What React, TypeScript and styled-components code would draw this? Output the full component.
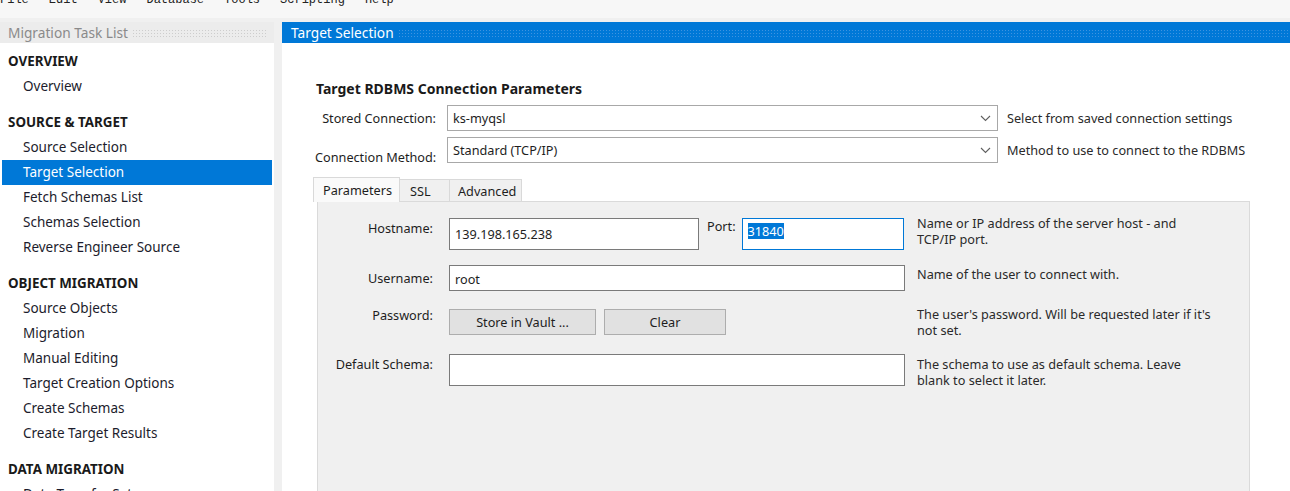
import React from 'react'
import styled, { createGlobalStyle } from 'styled-components'

const GlobalStyle = createGlobalStyle`
  html, body {
    margin: 0;
    padding: 0;
    background: #f0f0f0;
  }
  body {
    font-family: "Noto Sans", "Open Sans", sans-serif;
    color: #1e1e1e;
  }
`

const menuItems = ['File', 'Edit', 'View', 'Database', 'Tools', 'Scripting', 'Help']

type Section = { title: string; items: string[] }

const sections: Section[] = [
  { title: 'OVERVIEW', items: ['Overview'] },
  {
    title: 'SOURCE & TARGET',
    items: ['Source Selection', 'Target Selection', 'Fetch Schemas List', 'Schemas Selection', 'Reverse Engineer Source'],
  },
  {
    title: 'OBJECT MIGRATION',
    items: ['Source Objects', 'Migration', 'Manual Editing', 'Target Creation Options', 'Create Schemas', 'Create Target Results'],
  },
  { title: 'DATA MIGRATION', items: ['Data Transfer Setup'] },
]

const Chevron = () => (
  <svg width="11" height="7" viewBox="0 0 11 7">
    <polyline points="1,1 5.5,5.5 10,1" fill="none" stroke="#606060" strokeWidth="1.1" />
  </svg>
)

const Lines = ({ lines }: { lines: string[] }) => (
  <>
    {lines.map((l, i) => (
      <div key={i}>{l}</div>
    ))}
  </>
)

const App = () => {
  return (
    <Page>
      <GlobalStyle />
      <MenuBar>
        {menuItems.map((m) => (
          <MenuItem key={m}>{m}</MenuItem>
        ))}
      </MenuBar>
      <Body>
        <Sidebar>
          <PanelHeader $blue={false}>
            <span>Migration Task List</span>
            <Dots $color="#cdcdcd" />
          </PanelHeader>
          <TaskList>
            {sections.map((s) => (
              <TaskSection key={s.title}>
                <SectionTitle>{s.title}</SectionTitle>
                {s.items.map((it) => (
                  <TaskItem key={it} $active={it === 'Target Selection'}>
                    {it}
                  </TaskItem>
                ))}
              </TaskSection>
            ))}
          </TaskList>
        </Sidebar>
        <Main>
          <PanelHeader $blue>
            <span>Target Selection</span>
            <Dots $color="#3f94e0" />
          </PanelHeader>
          <Content>
            <Heading>Target RDBMS Connection Parameters</Heading>
            <ComboRow>
              <TopLabel $offset={0}>Stored Connection:</TopLabel>
              <Combo>
                <span>ks-myqsl</span>
                <Chevron />
              </Combo>
              <TopDesc>Select from saved connection settings</TopDesc>
            </ComboRow>
            <ComboRow>
              <TopLabel $offset={7}>Connection Method:</TopLabel>
              <Combo>
                <span>Standard (TCP/IP)</span>
                <Chevron />
              </Combo>
              <TopDesc>Method to use to connect to the RDBMS</TopDesc>
            </ComboRow>

            <Tabs>
              <TabStrip>
                <Tab $active>Parameters</Tab>
                <Tab $active={false}>SSL</Tab>
                <Tab $active={false}>Advanced</Tab>
              </TabStrip>
              <TabPanel>
                <FormRow $gap={15}>
                  <FieldLabel $offset={0}>Hostname:</FieldLabel>
                  <Field>
                    <TextBox $w={250} $h={32}>139.198.165.238</TextBox>
                    <PortLabel>Port:</PortLabel>
                    <TextBox $w={162} $h={32} $focused>
                      <Selected>31840</Selected>
                    </TextBox>
                  </Field>
                  <Desc $offset={-3}>
                    <Lines lines={['Name or IP address of the server host - and', 'TCP/IP port.']} />
                  </Desc>
                </FormRow>
                <FormRow $gap={18}>
                  <FieldLabel $offset={3}>Username:</FieldLabel>
                  <Field>
                    <TextBox $w={456} $h={26} $low>root</TextBox>
                  </Field>
                  <Desc $offset={1}>Name of the user to connect with.</Desc>
                </FormRow>
                <FormRow $gap={16}>
                  <FieldLabel $offset={-4}>Password:</FieldLabel>
                  <Field>
                    <Button $w={147}>Store in Vault ...</Button>
                    <Button $w={122}>Clear</Button>
                  </Field>
                  <Desc $offset={-3}>
                    <Lines lines={["The user's password. Will be requested later if it's", 'not set.']} />
                  </Desc>
                </FormRow>
                <FormRow $gap={0}>
                  <FieldLabel $offset={0}>Default Schema:</FieldLabel>
                  <Field>
                    <TextBox $w={456} $h={32} />
                  </Field>
                  <Desc $offset={2}>
                    <Lines lines={['The schema to use as default schema. Leave', 'blank to select it later.']} />
                  </Desc>
                </FormRow>
              </TabPanel>
            </Tabs>
          </Content>
        </Main>
      </Body>
    </Page>
  )
}

const Page = styled.div`
  width: 1290px;
  height: 491px;
  display: flex;
  flex-direction: column;
  overflow: hidden;
  background: #f0f0f0;
`

const MenuBar = styled.div`
  height: 18px;
  flex-shrink: 0;
  display: flex;
  align-items: flex-start;
  background: #f7f7f7;
  overflow: hidden;
`

const MenuItem = styled.div`
  font-family: "Liberation Mono", monospace;
  font-size: 12px;
  line-height: 12px;
  margin-top: -6px;
  margin-right: 20px;
  color: #222;
`

const Body = styled.div`
  flex: 1;
  display: flex;
  column-gap: 8px;
  padding-top: 4px;
  min-height: 0;
  overflow: hidden;
`

const Sidebar = styled.div`
  width: 274px;
  flex-shrink: 0;
  display: flex;
  flex-direction: column;
`

const PanelHeader = styled.div<{ $blue: boolean }>`
  height: 21px;
  flex-shrink: 0;
  display: flex;
  align-items: center;
  column-gap: 4px;
  padding-left: ${({ $blue }) => ($blue ? '9px' : '8px')};
  padding-right: ${({ $blue }) => ($blue ? '0' : '6px')};
  background: ${({ $blue }) => ($blue ? '#0078d7' : '#ececec')};
  color: ${({ $blue }) => ($blue ? '#ffffff' : '#8a8a8a')};
  font-size: 13.7px;
  white-space: nowrap;
`

const Dots = styled.div<{ $color: string }>`
  flex: 1;
  height: 9px;
  margin-top: 2px;
  background-image: radial-gradient(circle, ${({ $color }) => $color} 0.6px, transparent 0.9px);
  background-size: 3px 3px;
`

const TaskList = styled.div`
  flex: 1;
  background: #ffffff;
  padding-top: 6px;
`

const TaskSection = styled.div`
  margin-bottom: 11px;
`

const SectionTitle = styled.div`
  height: 25px;
  line-height: 25px;
  padding-left: 8px;
  font-size: 13.4px;
  font-weight: 700;
  color: #1a1a1a;
`

const TaskItem = styled.div<{ $active: boolean }>`
  height: 25px;
  line-height: 25px;
  margin: 0 2px;
  padding-left: 21px;
  font-size: 13.5px;
  color: ${({ $active }) => ($active ? '#ffffff' : '#1c1c2c')};
  background: ${({ $active }) => ($active ? '#0078d7' : 'transparent')};
`

const Main = styled.div`
  flex: 1;
  display: flex;
  flex-direction: column;
  min-width: 0;
`

const Content = styled.div`
  flex: 1;
  background: #ffffff;
  padding: 36px 0 0 33px;
`

const Heading = styled.div`
  font-size: 14px;
  font-weight: 700;
  color: #1a1a1a;
  margin-left: 1px;
  margin-bottom: 7px;
`

const ComboRow = styled.div`
  display: flex;
  align-items: flex-start;
  margin-bottom: 6px;
`

const TopLabel = styled.div<{ $offset: number }>`
  width: 121px;
  text-align: right;
  font-size: 12.7px;
  line-height: 26px;
  margin-top: ${({ $offset }) => $offset}px;
  white-space: nowrap;
`

const Combo = styled.div`
  width: 551px;
  height: 26px;
  margin-left: 11px;
  box-sizing: border-box;
  border: 1px solid #a8a8a8;
  background: #ffffff;
  display: flex;
  align-items: center;
  justify-content: space-between;
  padding: 0 6px 0 5px;
  font-size: 12.7px;
`

const TopDesc = styled.div`
  margin-left: 9px;
  font-size: 12.7px;
  line-height: 26px;
  color: #2a2a2a;
  white-space: nowrap;
`

const Tabs = styled.div`
  margin-top: 7px;
  margin-left: 2px;
  width: 933px;
`

const TabStrip = styled.div`
  display: flex;
  align-items: flex-end;
  height: 24px;
  margin-left: -4px;
`

const Tab = styled.div<{ $active: boolean }>`
  height: ${({ $active }) => ($active ? '25px' : '22px')};
  padding: 0 ${({ $active }) => ($active ? '9px' : '12px')};
  display: flex;
  align-items: ${({ $active }) => ($active ? 'center' : 'flex-end')};
  font-size: 12.7px;
  line-height: 20px;
  background: ${({ $active }) => ($active ? '#fafafa' : '#f0f0f0')};
  border: 1px solid #d9d9d9;
  border-bottom: none;
  margin-bottom: ${({ $active }) => ($active ? '-1px' : '0')};
  position: relative;
  z-index: ${({ $active }) => ($active ? 1 : 0)};
  box-sizing: border-box;
  white-space: nowrap;
  &:first-child {
    width: 87px;
  }
  &:nth-child(2) {
    width: 50px;
    border-left: none;
    padding: 0 10px;
  }
  &:nth-child(3) {
    width: 72px;
    border-left: none;
    padding: 0 8px;
  }
`

const TabPanel = styled.div`
  height: 300px;
  background: #f0f0f0;
  border: 1px solid #dadada;
  padding-top: 16px;
  box-sizing: border-box;
`

const FormRow = styled.div<{ $gap: number }>`
  display: flex;
  align-items: flex-start;
  margin-bottom: ${({ $gap }) => $gap}px;
`

const FieldLabel = styled.div<{ $offset: number }>`
  width: 115px;
  text-align: right;
  font-size: 12.7px;
  line-height: 20px;
  margin-top: ${({ $offset }) => $offset}px;
  white-space: nowrap;
`

const Field = styled.div`
  width: 456px;
  margin-left: 16px;
  display: flex;
  align-items: flex-start;
  column-gap: 8px;
`

const PortLabel = styled.div`
  font-size: 12.7px;
  line-height: 20px;
  margin-top: -2px;
  margin-right: -2px;
`

const TextBox = styled.div<{ $w: number; $h: number; $focused?: boolean; $low?: boolean }>`
  width: ${({ $w }) => $w}px;
  height: ${({ $h }) => $h}px;
  box-sizing: border-box;
  border: 1px solid ${({ $focused }) => ($focused ? '#0078d7' : '#7a7a7a')};
  background: #ffffff;
  font-size: 12.7px;
  padding-left: 5px;
  display: flex;
  align-items: ${({ $focused, $low }) => ($focused ? 'flex-start' : $low ? 'flex-end' : 'center')};
  padding-top: ${({ $focused }) => ($focused ? '4px' : '0')};
  padding-bottom: ${({ $low }) => ($low ? '2px' : '0')};
`

const Selected = styled.span`
  background: #0078d7;
  color: #ffffff;
  line-height: 16px;
`

const Button = styled.div<{ $w: number }>`
  width: ${({ $w }) => $w}px;
  height: 26px;
  box-sizing: border-box;
  background: #e1e1e1;
  border: 1px solid #adadad;
  font-size: 12.7px;
  display: flex;
  align-items: center;
  justify-content: center;
`

const Desc = styled.div<{ $offset: number }>`
  margin-left: 12px;
  margin-top: ${({ $offset }) => $offset}px;
  font-size: 12.7px;
  line-height: 16px;
  color: #2a2a2a;
  white-space: nowrap;
`

export default App
